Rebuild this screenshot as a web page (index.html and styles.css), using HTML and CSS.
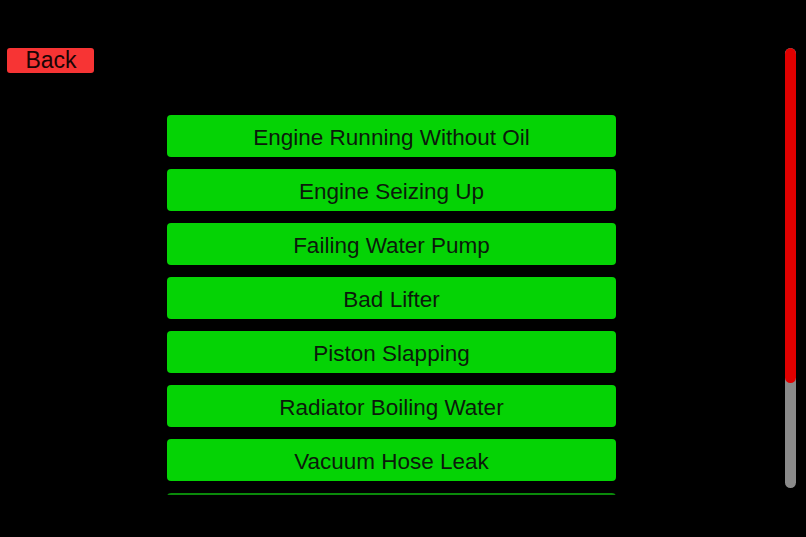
FILE: index.html
```html
<!DOCTYPE html>
<html>
<head>
<meta charset="utf-8">
<link rel="stylesheet" href="styles.css">
</head>
<body>
<div class="page">
  <button class="back">Back</button>
  <div class="list">
    <div class="item">Engine Running Without Oil</div>
    <div class="item">Engine Seizing Up</div>
    <div class="item">Failing Water Pump</div>
    <div class="item">Bad Lifter</div>
    <div class="item">Piston Slapping</div>
    <div class="item">Radiator Boiling Water</div>
    <div class="item">Vacuum Hose Leak</div>
    <div class="item item-peek"></div>
  </div>
  <div class="scrollbar"><div class="thumb"></div></div>
</div>
</body>
</html>
```
FILE: styles.css
```css
html, body {
  margin: 0;
  padding: 0;
  background: #000;
  width: 806px;
  height: 537px;
  overflow: hidden;
}
.page {
  display: flex;
  align-items: flex-start;
  padding-top: 48px;
  font-family: "Liberation Sans", Arial, sans-serif;
}
.back {
  margin: 0 0 0 7px;
  width: 87px;
  height: 25px;
  padding: 0 0 0 1px;
  border: none;
  border-radius: 3px;
  background: #f73434;
  color: #1a0505;
  font-family: "Liberation Sans", Arial, sans-serif;
  font-size: 23px;
  line-height: 25px;
}
.list {
  margin: 67px 0 0 73px;
  width: 449px;
  height: 380px;
  overflow: hidden;
  display: flex;
  flex-direction: column;
  gap: 12px;
}
.item {
  flex: 0 0 42px;
  box-sizing: border-box;
  padding-top: 3px;
  border-radius: 4px;
  background: #05d305;
  color: #0b1a0b;
  font-size: 22.5px;
  display: flex;
  align-items: center;
  justify-content: center;
}
.item-peek {
  background: #0a8a0a;
}
.scrollbar {
  margin-left: 169px;
  width: 11px;
  height: 440px;
  border-radius: 6px;
  background: #8a8a8a;
  overflow: hidden;
}
.thumb {
  height: 335px;
  border-radius: 6px;
  background: #e00000;
}
```
